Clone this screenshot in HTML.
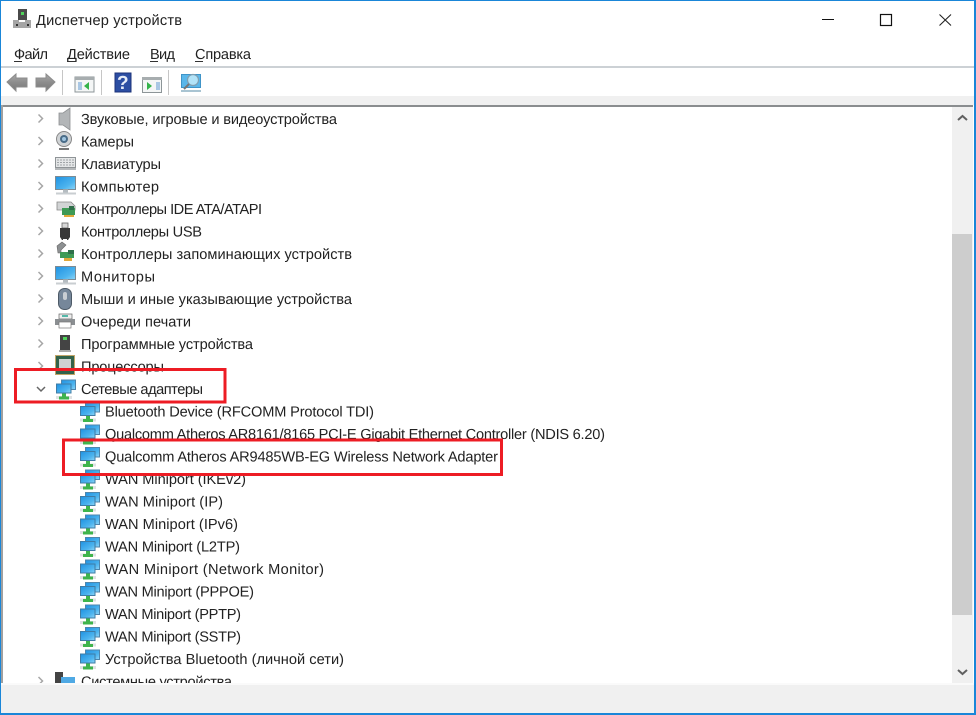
<!DOCTYPE html>
<html lang="ru"><head><meta charset="utf-8"><title>Диспетчер устройств</title>
<style>
html,body{margin:0;padding:0;background:#fff;width:976px;height:715px;overflow:hidden}
svg{display:block}
text{font-family:"Liberation Sans",sans-serif;font-size:14.6px;fill:#222;text-rendering:geometricPrecision}
</style></head><body>
<svg width="976" height="715" viewBox="0 0 976 715" xmlns="http://www.w3.org/2000/svg">
<defs>
<linearGradient id="scr" x1="0" y1="0" x2="1" y2="1"><stop offset="0" stop-color="#1f92e2"/><stop offset=".65" stop-color="#4db4ee"/><stop offset="1" stop-color="#8fd6f8"/></linearGradient>
<linearGradient id="arr" x1="0" y1="0" x2="0" y2="1"><stop offset="0" stop-color="#a8a8a8"/><stop offset=".5" stop-color="#8c8c8c"/><stop offset="1" stop-color="#777"/></linearGradient>
<symbol id="chev" overflow="visible"><path d="M-2.500-4 1.500 0-2.500 4" fill="none" stroke="#a6a6a6" stroke-width="1.500"/></symbol>
<symbol id="net" overflow="visible">
<rect x="5.500" y="-8.500" width="14" height="9.500" fill="url(#scr)" stroke="#4f86ad"/>
<rect x="0.500" y="-4.500" width="14.500" height="9" fill="url(#scr)" stroke="#3f7ca6"/>
<rect x="0" y="7.500" width="16" height="3" fill="#dfe2e3"/>
<path d="M6 5h4v3h3v3H3V8h3z" fill="#3fb44c"/>
</symbol>
<symbol id="mon" overflow="visible">
<rect x="0.500" y="-9.500" width="20" height="13" fill="url(#scr)" stroke="#7d8b94"/>
<rect x="8" y="3.500" width="5" height="3" fill="#b5bcc1"/><rect x="1" y="6.500" width="20" height="2" fill="#c9ced1"/>
</symbol>
</defs>

<!-- window frame -->
<rect width="976" height="715" fill="#fff"/>

<!-- title bar icon -->
<rect x="18" y="9" width="9" height="11" fill="#4a4a4a"/>
<rect x="21" y="12" width="3" height="3" fill="#4fd35a"/>
<path d="M13 20h6v2h6v-2h6v8h-18z" fill="#a5a5a5"/>
<rect x="16" y="24" width="2" height="2" fill="#333"/><rect x="27" y="24" width="2" height="2" fill="#333"/>
<text x="36" y="25" textLength="146">Диспетчер устройств</text>

<!-- window controls -->
<rect x="822" y="19" width="12" height="1" fill="#111"/>
<rect x="880.500" y="14.500" width="11" height="11" fill="none" stroke="#111" stroke-width="1.200"/>
<path d="M939.500 14.500 951 25.500M951 14.500 939.500 25.500" stroke="#222" stroke-width="1.100"/>

<!-- menu -->
<text x="14" y="59" textLength="34">Файл</text><rect x="14" y="61" width="8" height="1" fill="#333"/>
<text x="67" y="59" textLength="63">Действие</text><rect x="67" y="61" width="9" height="1" fill="#333"/>
<text x="150" y="59" textLength="25">Вид</text><rect x="150" y="61" width="8" height="1" fill="#333"/>
<text x="195" y="59" textLength="56">Справка</text><rect x="195" y="61" width="8" height="1" fill="#333"/>
<rect x="1" y="66" width="974" height="2" fill="#ccd1d5"/>

<!-- toolbar -->
<path d="M7 82 16 74v4h11v9H16v4z" fill="url(#arr)" stroke="#8c8c8c"/>
<path d="M55 82 46 74v4H36v9h10v4z" fill="url(#arr)" stroke="#8c8c8c"/>
<rect x="62" y="70" width="1" height="25" fill="#c6c6c6"/>
<rect x="101" y="70" width="1" height="25" fill="#c6c6c6"/>
<rect x="168" y="70" width="1" height="25" fill="#c6c6c6"/>
<g>
<rect x="75" y="77" width="19" height="15" fill="#f4f6f6" stroke="#8d9598"/><rect x="75" y="77" width="19" height="3" fill="#a7adaf"/>
<rect x="78" y="82" width="4" height="8" fill="#a9c7e4"/>
<path d="M89 82v8l-5-4z" fill="#34b34a"/>
<rect x="115" y="73" width="16" height="19" fill="#2c4ea3" stroke="#1c3378"/>
<text x="117" y="89" style="font-size:19px;font-weight:bold;fill:#e6ecf8" textLength="11">?</text>
<rect x="142.500" y="77.500" width="19" height="15" fill="#f4f6f6" stroke="#8d9598"/><rect x="142" y="77" width="20" height="3" fill="#a7adaf"/>
<path d="M147 82v8l5-4z" fill="#34b34a"/>
<rect x="156" y="82" width="4" height="8" fill="#a9c7e4"/>
<rect x="181.500" y="74.500" width="19" height="13" fill="#5ab7ea" stroke="#3f94c8"/>
<circle cx="193" cy="80" r="5.500" fill="#b2e3f8" stroke="#7f9fb2" stroke-width="1.200"/>
<path d="M189 84 184 89" stroke="#777" stroke-width="2"/>
<rect x="181" y="90" width="20" height="2" fill="#a9c4d2"/>
</g>

<!-- band above tree -->
<rect x="1" y="96" width="974" height="9" fill="#f0f0f0"/>
<rect x="1" y="105" width="972" height="2" fill="#8a8d8f"/>
<rect x="1" y="105" width="2" height="579" fill="#a0a0a0"/>
<rect x="3" y="107" width="949" height="577" fill="#fff"/>

<!-- category rows -->
<use href="#chev" x="41" y="118.500"/><use href="#chev" x="41" y="141"/><use href="#chev" x="41" y="163.500"/><use href="#chev" x="41" y="186"/><use href="#chev" x="41" y="208.500"/><use href="#chev" x="41" y="231"/><use href="#chev" x="41" y="253.500"/><use href="#chev" x="41" y="276"/><use href="#chev" x="41" y="298.500"/><use href="#chev" x="41" y="321"/><use href="#chev" x="41" y="343.500"/><use href="#chev" x="41" y="366"/><use href="#chev" x="41" y="681"/>
<path d="M37 387l4 4 4-4" fill="none" stroke="#666" stroke-width="1.500"/>

<!-- speaker -->
<path d="M59 113h4l7-5v22l-7-5h-4z" fill="#b3b6b8" stroke="#8d9092" stroke-width=".8"/>
<!-- camera -->
<circle cx="64" cy="139" r="7.500" fill="#d0d3d5" stroke="#888"/><circle cx="64" cy="139" r="4" fill="#4a6c88"/><circle cx="64" cy="139" r="2" fill="#9fc5e0"/>
<rect x="59" y="148" width="10" height="2" fill="#777"/>
<!-- keyboard -->
<rect x="55.500" y="157.500" width="20" height="10" fill="#e4e6e7" stroke="#8f9497"/>
<path d="M57 160h17M57 162.500h17M57 165h17" stroke="#a0a4a7" stroke-dasharray="2 1"/>
<rect x="55" y="168" width="21" height="2" fill="#b5b8ba"/>
<!-- computer -->
<use href="#mon" x="55" y="186"/>
<!-- IDE -->
<path d="M57 202h14l4 4v4H57z" fill="#d2d4d5" stroke="#888" stroke-width=".8"/>
<rect x="62" y="208" width="13" height="7" fill="#3e9a55"/><rect x="69" y="206" width="5" height="4" fill="#2f6f4a"/><rect x="64" y="215" width="10" height="2" fill="#e0a93a"/>
<!-- USB -->
<rect x="62" y="223" width="6" height="5" fill="#d8d8d8" stroke="#666" stroke-width=".8"/>
<path d="M60 228h10v9l-2 3h-1v-1h-4v1h-1l-2-3z" fill="#383838"/>
<!-- storage controllers -->
<path d="M57 246l5-4 4 3-5 5v3h-3z" fill="#8d9092" stroke="#666" stroke-width=".6"/>
<rect x="60" y="252" width="14" height="6" fill="#3e9a55"/><rect x="68" y="250" width="6" height="4" fill="#2f6f4a"/><rect x="64" y="258" width="8" height="3" fill="#e0a93a"/>
<!-- monitor -->
<use href="#mon" x="55" y="276"/>
<!-- mouse -->
<rect x="58.500" y="288.500" width="13" height="21" rx="6" fill="#76879a" stroke="#4d5a67"/><rect x="63" y="292" width="4" height="8" rx="2" fill="#c9ced3"/>
<!-- printer -->
<rect x="59" y="314" width="13" height="5" fill="#eee" stroke="#666" stroke-width=".7"/><rect x="62" y="315" width="6" height="2" fill="#55b7a8"/>
<rect x="55" y="319" width="20" height="6" fill="#8b8f92"/><rect x="59" y="322" width="12" height="6" fill="#fff" stroke="#777" stroke-width=".7"/>
<!-- software devices -->
<rect x="60" y="335" width="10" height="15" fill="#444"/><rect x="63" y="337" width="4" height="3" fill="#4fd35a"/><rect x="59" y="350" width="12" height="2" fill="#aaa"/>
<!-- cpu -->
<rect x="55.500" y="355.500" width="19" height="19" fill="#32624a" stroke="#c2a66a"/><rect x="59" y="359" width="12" height="12" fill="#cfd2d2"/>

<use href="#net" x="56" y="388.500"/>
<use href="#net" x="80" y="411"/><use href="#net" x="80" y="433.500"/><use href="#net" x="80" y="456"/><use href="#net" x="80" y="478.500"/><use href="#net" x="80" y="501"/><use href="#net" x="80" y="523.500"/><use href="#net" x="80" y="546"/><use href="#net" x="80" y="568.500"/><use href="#net" x="80" y="591"/><use href="#net" x="80" y="613.500"/><use href="#net" x="80" y="636"/><use href="#net" x="80" y="658.500"/>

<!-- system devices icon -->
<rect x="55" y="672" width="8" height="14" fill="#444"/><rect x="61" y="677" width="14" height="9" fill="#4fa9e4"/>

<!-- labels -->
<text x="81" y="124" textLength="256">Звуковые, игровые и видеоустройства</text>
<text x="81" y="146.500" textLength="53">Камеры</text>
<text x="81" y="169" textLength="80">Клавиатуры</text>
<text x="81" y="191.500" textLength="78">Компьютер</text>
<text x="81" y="214" textLength="181">Контроллеры IDE ATA/ATAPI</text>
<text x="81" y="236.500" textLength="121">Контроллеры USB</text>
<text x="81" y="259" textLength="271">Контроллеры запоминающих устройств</text>
<text x="81" y="281.500" textLength="74">Мониторы</text>
<text x="81" y="304" textLength="271">Мыши и иные указывающие устройства</text>
<text x="81" y="326.500" textLength="110">Очереди печати</text>
<text x="81" y="349" textLength="172">Программные устройства</text>
<text x="81" y="371.500" textLength="83">Процессоры</text>
<text x="81" y="394" textLength="122">Сетевые адаптеры</text>
<text x="105" y="416.500" textLength="269">Bluetooth Device (RFCOMM Protocol TDI)</text>
<text x="105" y="439" textLength="500">Qualcomm Atheros AR8161/8165 PCI-E Gigabit Ethernet Controller (NDIS 6.20)</text>
<text x="105" y="461.500" textLength="393">Qualcomm Atheros AR9485WB-EG Wireless Network Adapter</text>
<text x="105" y="484" textLength="141">WAN Miniport (IKEv2)</text>
<text x="105" y="506.500" textLength="118">WAN Miniport (IP)</text>
<text x="105" y="529" textLength="133">WAN Miniport (IPv6)</text>
<text x="105" y="551.500" textLength="135">WAN Miniport (L2TP)</text>
<text x="105" y="574" textLength="219">WAN Miniport (Network Monitor)</text>
<text x="105" y="596.500" textLength="149">WAN Miniport (PPPOE)</text>
<text x="105" y="619" textLength="136">WAN Miniport (PPTP)</text>
<text x="105" y="641.500" textLength="136">WAN Miniport (SSTP)</text>
<text x="105" y="664" textLength="239">Устройства Bluetooth (личной сети)</text>
<text x="81" y="686.500" textLength="151">Системные устройства</text>

<!-- red highlights -->
<rect x="15.500" y="369.500" width="209.500" height="32.500" fill="none" stroke="#ed1c24" stroke-width="3"/>
<rect x="63.500" y="440" width="438" height="34.500" fill="none" stroke="#ed1c24" stroke-width="3"/>

<!-- scrollbar -->
<rect x="952" y="107" width="21" height="577" fill="#f0f0f0"/>
<rect x="952" y="234" width="20" height="381" fill="#cdcdcd"/>
<path d="M958 120l4.500-4 4.500 4" fill="none" stroke="#606060" stroke-width="2"/>
<path d="M958 670l4.500 4 4.500-4" fill="none" stroke="#606060" stroke-width="2"/>

<!-- status bar -->
<rect x="1" y="683" width="974" height="2" fill="#fafafa"/>
<rect x="1" y="685" width="974" height="29" fill="#f0f0f0"/>

<!-- blue border -->
<rect x="0" y="0" width="976" height="1" fill="#1a86d8"/>
<rect x="0" y="0" width="1" height="715" fill="#1a86d8"/>
<rect x="974" y="0" width="2" height="715" fill="#1a86d8"/>
<rect x="0" y="713" width="976" height="2" fill="#1a86d8"/>
</svg>
</body></html>
